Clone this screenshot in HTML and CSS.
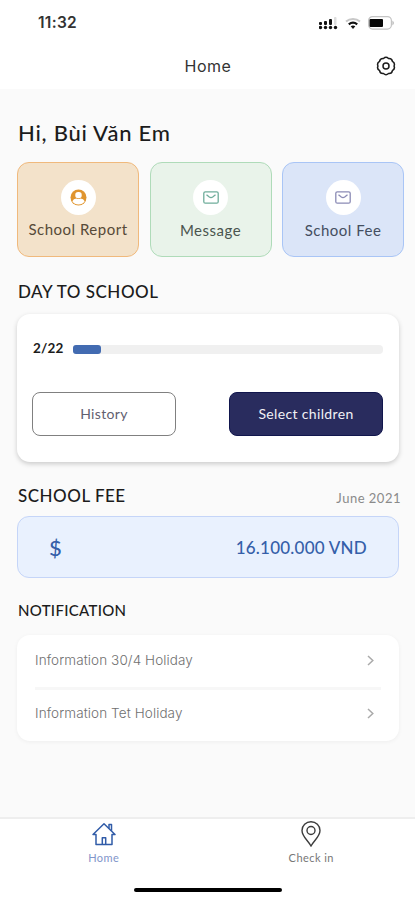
FILE: index.html
```html
<!DOCTYPE html>
<html lang="en">
<head>
<meta charset="utf-8">
<meta name="viewport" content="width=device-width, initial-scale=1">
<title>Home</title>
<link rel="stylesheet" href="styles.css">
</head>
<body>
<div class="app">
  <div class="status">
    <span class="time">11:32</span>
    <div class="status-icons">
      <svg width="19" height="13" viewBox="0 0 19 13"><g fill="#111"><rect x="0" y="5" width="3" height="3" rx="1"/><rect x="5" y="4" width="3" height="4" rx="1"/><rect x="10" y="2" width="3" height="6" rx="1"/><circle cx="1.500" cy="10.500" r="1.700"/><circle cx="6.500" cy="10.500" r="1.700"/><circle cx="11.500" cy="10.500" r="1.700"/><circle cx="16.500" cy="10.500" r="1.700"/></g><rect x="15" y="0" width="2.500" height="8" rx="1" fill="#ddd"/></svg>
      <svg width="16" height="13" viewBox="0 0 16 13" fill="none" stroke-width="2"><path d="M1 4.500C5 1 11 1 15 4.500" stroke="#c8c8c8"/><path d="M3.800 7.300C6.300 5.200 9.700 5.200 12.200 7.300" stroke="#111" stroke-width="2.200"/><path d="M5.700 9.200Q8 7.600 10.300 9.200L8 12Z" fill="#111"/></svg>
      <svg width="27" height="14" viewBox="0 0 27 14"><rect x=".6" y=".6" width="22.800" height="12.500" rx="4" fill="#fff" stroke="#c4c4c4" stroke-width="1.200"/><rect x="1.500" y="3" width="13.500" height="8" rx="1" fill="#080808"/><path d="M24.500 4.500Q27 7 24.500 9.500Z" fill="#aaa"/></svg>
    </div>
  </div>
  <header class="header">
    <h1 class="title">Home</h1>
    <svg class="gear" width="20" height="20" viewBox="0 0 20 20" fill="none" stroke="#1c1c1c" stroke-width="1.500" stroke-linejoin="round"><path d="M7.500 2.500Q10 .1 12.500 2.500Q16 2.200 16.400 5.400Q19.400 7.200 18 10Q19.400 12.800 16.400 14.600Q16 17.800 12.500 17.500Q10 19.900 7.500 17.500Q4 17.800 3.600 14.600Q.6 12.800 2 10Q.6 7.200 3.600 5.400Q4 2.200 7.500 2.500Z"/><circle cx="10" cy="10" r="3"/></svg>
  </header>
  <main class="content">
    <h2 class="greeting">Hi, Bùi Văn Em</h2>
    <div class="tiles">
      <div class="tile tile-report">
        <span class="disc"><svg width="17" height="17" viewBox="0 0 17 17"><circle cx="8.500" cy="8.500" r="8" fill="#e0952f"/><rect x="5.300" y="3" width="6.400" height="6.300" rx="2.800" fill="#fff"/><path d="M2.300 12.200Q3.500 9.600 6.400 9.400Q8.500 10.700 10.600 9.400Q13.500 9.600 14.700 12.200Q12.500 15.400 8.500 15.400T2.300 12.200Z" fill="#fff"/></svg></span>
        <span class="label label-report">School Report</span>
      </div>
      <div class="tile tile-message">
        <span class="disc"><svg width="16" height="13" viewBox="0 0 16 13" fill="none" stroke="#6fad9b" stroke-width="1.300"><rect x=".8" y=".8" width="14.400" height="11.400" rx="1.500"/><path d="M3.500 3.700L6.300 6Q8 7.100 9.700 6L12.500 3.700"/></svg></span>
        <span class="label label-message">Message</span>
      </div>
      <div class="tile tile-fee">
        <span class="disc"><svg width="16" height="13" viewBox="0 0 16 13" fill="none" stroke="#8b8bb5" stroke-width="1.300"><rect x=".8" y=".8" width="14.400" height="11.400" rx="1.500"/><path d="M3.500 3.700L6.300 6Q8 7.100 9.700 6L12.500 3.700"/></svg></span>
        <span class="label label-fee">School Fee</span>
      </div>
    </div>
    <h3 class="section day-title">DAY TO SCHOOL</h3>
    <section class="card day-card">
      <div class="progress">
        <span class="count">2/22</span>
        <div class="track"><div class="fill"></div></div>
      </div>
      <div class="actions">
        <button class="btn btn-outline"><span>History</span></button>
        <button class="btn btn-solid"><span>Select children</span></button>
      </div>
    </section>
    <div class="fee-head">
      <h3 class="section fee-title">SCHOOL FEE</h3>
      <span class="month">June 2021</span>
    </div>
    <section class="fee-card"><span class="dollar">$</span><span class="amount">16.100.000 VND</span></section>
    <h3 class="section note-title">NOTIFICATION</h3>
    <section class="card notes">
      <div class="note"><span class="note-a">Information 30/4 Holiday</span><svg width="7" height="11" viewBox="0 0 7 11" fill="none" stroke="#aaa" stroke-width="1.500"><path d="M1 1l4.800 4.500L1 10"/></svg></div>
      <div class="note"><span class="note-b">Information Tet Holiday</span><svg width="7" height="11" viewBox="0 0 7 11" fill="none" stroke="#aaa" stroke-width="1.500"><path d="M1 1l4.800 4.500L1 10"/></svg></div>
    </section>
  </main>
  <nav class="tabs">
    <div class="tab tab-home"><svg width="24" height="26" viewBox="0 0 24 26" fill="none" stroke="#315ca8" stroke-width="1.500" stroke-linejoin="round"><path d="M1 13.500L12 2.800 23 13.500H20V23.500H4V13.500Z"/><path d="M17 7.500V3.500h2.500v6.300M10.300 23.300v-6.500h3.400v6.500"/></svg><span>Home</span></div>
    <div class="tab tab-check"><svg width="20" height="26" viewBox="0 0 20 26" fill="none" stroke="#3c3c3c" stroke-width="1.400"><path d="M10 25C7 19.500 1 15.500 1 9.500A9 8.700 0 0 1 19 9.500C19 15.500 13 19.500 10 25Z"/><circle cx="10" cy="9.500" r="4"/></svg><span>Check in</span></div>
  </nav>
  <div class="home-indicator"></div>
</div>
</body>
</html>
```
FILE: styles.css
```css
* { box-sizing: border-box; }
body { margin: 0; background: #fff; font-family: Lato, sans-serif; color: #1c1c1c; }
h1, h2, h3 { margin: 0; font-weight: 500; }
span, h1, h2, h3 { white-space: nowrap; }
svg { display: block; flex: none; }
.app { width: 415px; height: 900px; display: flex; flex-direction: column; overflow: hidden; }
.status { height: 46px; display: flex; justify-content: space-between; padding: 0 20px 0 38px; align-items: center; }
.time { font: 600 15.500px/20px Inter, sans-serif; letter-spacing: .3px; color: #333; }
.status-icons { display: flex; align-items: center; gap: 7px; }
.header { height: 43px; display: grid; grid-template-columns: 1fr auto 1fr; align-items: center; padding: 0 19px 4px 20px; }
.title { grid-column: 2; font: 400 16px/20px Inter, sans-serif; letter-spacing: .5px; color: #333; }
.gear { justify-self: end; }
.content { height: 728px; background: #fafafa; padding: 28px 17px 0; }
.greeting { font-size: 22px; line-height: 32px; letter-spacing: .75px; padding-left: 1px; }
.tiles { display: grid; grid-template-columns: repeat(3, 122px); gap: 10.500px; margin-top: 13px; }
.tile { height: 95px; border: 1px solid; border-radius: 12px; padding-top: 17px; display: flex; flex-direction: column; align-items: center; }
.tile-report { background: #f3e2ca; border-color: #f0b97c; color: #574a38; }
.tile-message { background: #e9f3ea; border-color: #afdbb9; color: #4b554f; }
.tile-fee { background: #dbe5f8; border-color: #a9c5f6; color: #444e60; }
.disc { width: 35px; height: 35px; border-radius: 50%; background: #fff; display: flex; align-items: center; justify-content: center; }
.label { font-size: 15px; line-height: 20px; margin-top: 5px; letter-spacing: .5px; }
.label-report { margin-top: 4px; }
.section { font-size: 17px; line-height: 22px; padding-left: 1px; letter-spacing: .5px; }
.day-title { margin-top: 24px; }
.card { background: #fff; border-radius: 13px; }
.day-card { width: 382px; height: 148px; margin-top: 11px; padding: 25px 16px 0; box-shadow: 0 2px 5px rgba(0,0,0,.19); }
.progress { height: 20px; display: flex; align-items: center; }
.count { width: 40px; font-size: 13.500px; font-weight: 700; letter-spacing: .2px; position: relative; top: -1px; }
.track { flex: 1; height: 9px; border-radius: 4px; background: #f0f0f0; }
.fill { width: 28px; height: 9px; border-radius: 3px; background: #426bb1; }
.actions { display: flex; justify-content: space-between; margin: 33px 0 0 -1px; }
.btn { height: 44px; border-radius: 8px; font: 400 14px/20px Lato, sans-serif; letter-spacing: .35px; padding: 0; }
.btn-outline { width: 144px; background: #fff; border: 1px solid #808080; color: #62606f; }
.btn-solid { width: 154px; background: #292c5e; border: 1px solid #11164d; color: #f1f1f5; }
.fee-head { display: flex; justify-content: space-between; align-items: flex-start; margin-top: 23px; height: 22px; width: 384px; }
.month { font-size: 13px; line-height: 18px; margin-top: 4px; letter-spacing: .5px; color: #8a8a8a; }
.fee-card { width: 382px; height: 62px; margin-top: 9px; border: 1px solid #c5d5f8; border-radius: 12px; background: #e9f1fe; color: #355fa9; display: flex; align-items: center; justify-content: space-between; padding: 0 31px; }
.dollar { font-size: 22px; font-weight: 500; }
.amount { font-size: 17px; font-weight: 500; letter-spacing: .23px; }
.note-title { margin-top: 21px; font-size: 15px; letter-spacing: .3px; }
.notes { width: 382px; height: 106px; margin-top: 14px; padding: 0 18px; box-shadow: 0 1px 4px rgba(0,0,0,.05); }
.note { height: 52px; display: flex; align-items: center; justify-content: space-between; padding: 0 7px 2px 0; font: 300 13.500px/18px Inter, sans-serif; letter-spacing: .1px; color: #707070; }
.note + .note { height: 53px; border-top: 3px solid #f7f7f7; padding-bottom: 4px; }
.tabs { height: 65px; border-top: 2px solid #eee; display: grid; grid-template-columns: 1fr 1fr; font-size: 11px; line-height: 14px; }
.tab { display: flex; flex-direction: column; align-items: center; padding-top: 2px; gap: 4px; letter-spacing: .45px; }
.tab-home { color: #8195ca; }
.tab-check { color: #777; }
.home-indicator { width: 148px; height: 4px; border-radius: 2px; background: #000; margin: 6px auto 0 134px; }
```
